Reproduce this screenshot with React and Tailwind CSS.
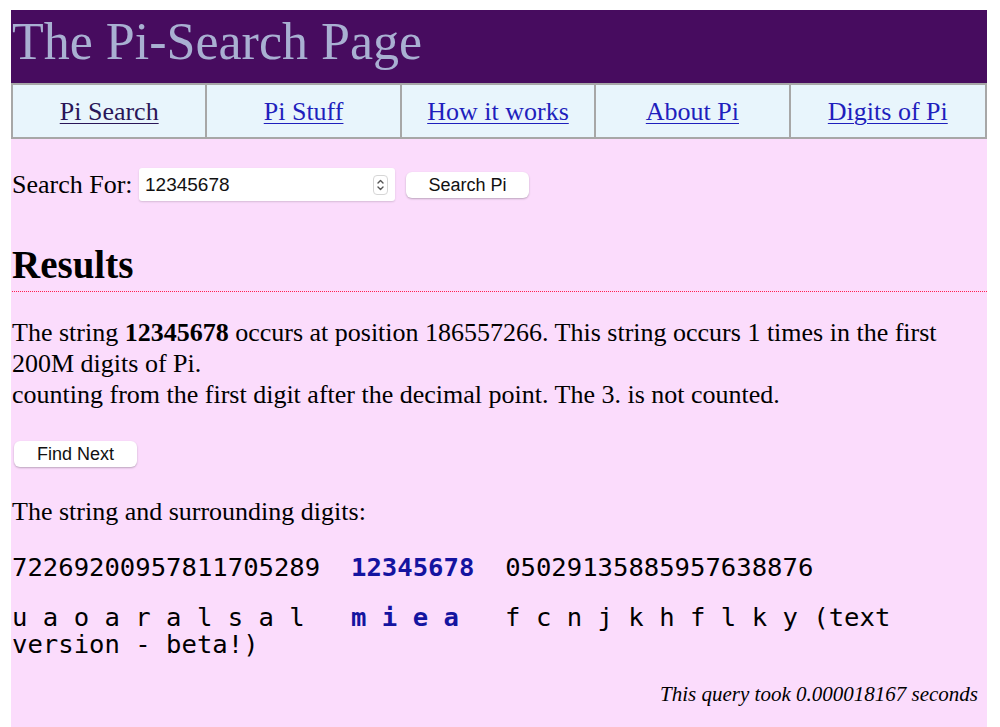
import React from 'react';

const navItems = ['Pi Search', 'Pi Stuff', 'How it works', 'About Pi', 'Digits of Pi'];

const serif = "font-['Liberation_Serif','Times_New_Roman',serif]";
const sans = "font-['Liberation_Sans',Arial,sans-serif]";
const mono = "font-['DejaVu_Sans_Mono','Liberation_Mono',monospace]";

function Spinner() {
  return (
    <div className="absolute right-[7px] top-[7px] w-[15px] h-[20px] rounded-[4px] border border-[#d6d6d6] bg-white flex items-center justify-center">
      <svg width="9" height="16" viewBox="0 0 9 16" fill="none" stroke="#555" strokeWidth="1.4" strokeLinecap="round" strokeLinejoin="round">
        <path d="M2 6 L4.5 3.5 L7 6" />
        <path d="M2 10 L4.5 12.5 L7 10" />
      </svg>
    </div>
  );
}

export default function App() {
  return (
    <div className={`min-h-[727px] bg-white pt-[10px] pl-[11px] pr-[13px] ${serif} text-black`}>
      {/* Header */}
      <div className="h-[73px] bg-[#470c5f] pl-[1px] pt-[6px]">
        <h1 className="text-[52px] leading-[52px] font-normal text-[#a9b0d2]">The Pi-Search Page</h1>
      </div>

      {/* Nav */}
      <div className="grid grid-cols-5 h-[56px] bg-[#e8f5fc] border-2 border-[#a7a7a7] divide-x-2 divide-[#a7a7a7]">
        {navItems.map((item, i) => (
          <div key={item} className="flex items-center justify-center">
            <a
              href="#"
              className={`text-[26px] underline underline-offset-[3px] decoration-1 ${i === 0 ? 'text-[#2a1658]' : 'text-[#1f1fbd]'}`}
            >
              {item}
            </a>
          </div>
        ))}
      </div>

      {/* Content */}
      <div className="bg-[#fbdcfc] min-h-[588px] pl-[1px] pr-[9px]">
        <div className="flex items-center pt-[29px] h-[62px]">
          <span className="w-[127px] text-[26px] leading-[33px] whitespace-nowrap">Search For:</span>
          <div className="relative">
            <input
              readOnly
              value="12345678"
              className={`w-[256px] h-[33px] bg-white rounded-[3px] shadow-[0_1px_2px_rgba(0,0,0,0.15)] pl-[6px] text-[19px] text-[#111] outline-none ${sans}`}
            />
            <Spinner />
          </div>
          <button className={`ml-[11px] w-[123px] h-[26px] bg-white rounded-[6px] shadow-[0_1px_2px_rgba(0,0,0,0.25)] text-[18px] text-[#111] ${sans}`}>
            Search Pi
          </button>
        </div>

        <h2 className="mt-[42px] text-[39px] leading-[44px] font-bold pb-[4px] border-b-[1.5px] border-dotted border-[#ff1f4f] -mr-[9px]">
          Results
        </h2>

        <p className="mt-[25px] text-[26px] leading-[31px]">
          The string <b>12345678</b> occurs at position 186557266. This string occurs 1 times in the first 200M digits of Pi.
          <br />
          counting from the first digit after the decimal point. The 3. is not counted.
        </p>

        <button className={`mt-[31px] ml-[2px] w-[123px] h-[26px] bg-white rounded-[6px] shadow-[0_1px_2px_rgba(0,0,0,0.25)] text-[18px] text-[#111] ${sans}`}>
          Find Next
        </button>

        <p className="mt-[29px] text-[26px] leading-[31px]">The string and surrounding digits:</p>

        <div className={`mt-[27px] text-[25.6px] leading-[27px] whitespace-pre-wrap ${mono}`}>
          72269200957811705289{'  '}<b className="text-[#1414a0]">12345678</b>{'  '}05029135885957638876
        </div>

        <div className={`mt-[23px] text-[25.6px] leading-[27px] whitespace-pre-wrap ${mono}`}>
          {'u a o a r a l s a l   '}<b className="text-[#1414a0]">m i e a</b>{'   f c n j k h f l k y '}(text version - beta!)
        </div>

        <p className="mt-[24px] pb-[20px] text-right text-[21px] leading-[24px] italic">
          This query took 0.000018167 seconds
        </p>
      </div>
    </div>
  );
}
